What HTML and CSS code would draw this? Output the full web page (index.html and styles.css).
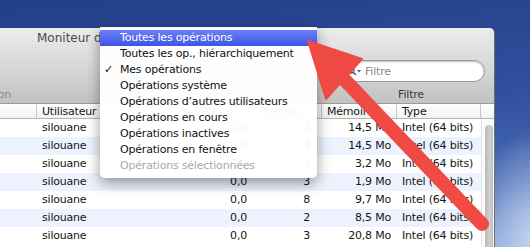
FILE: index.html
```html
<!DOCTYPE html>
<html lang="fr">
<head>
    <meta charset="UTF-8">
    <title>Moniteur d’activité</title>
    <link rel="stylesheet" href="styles.css">
</head>
<body>
    <div class="window">
        <div class="toolbar">
            <div class="titlebar">Moniteur d’activité</div>
            <div class="tools">
                <div class="search">
                    <svg class="search-icon" width="14" height="10" viewBox="0 0 14 10">
                        <circle cx="4" cy="4" r="3" fill="none" stroke="#5a5a5a" stroke-width="1.4"/>
                        <line x1="6.2" y1="6.2" x2="9" y2="9" stroke="#5a5a5a" stroke-width="1.6"/>
                        <polygon points="10,4 14,4 12,6.5" fill="#5a5a5a"/>
                    </svg>
                    <span class="placeholder">Filtre</span>
                </div>
            </div>
            <div class="labels">
                <div class="label-left"><span>Quitter l’opération</span></div>
                <div class="label-filter">Filtre</div>
            </div>
        </div>

        <div class="table-head">
            <div class="col c-name"></div>
            <div class="col c-user">Utilisateur</div>
            <div class="col c-cpu">% CPU</div>
            <div class="col c-threads">Threads</div>
            <div class="col c-mem">Mémoire</div>
            <div class="col c-type">Type</div>
            <div class="col c-scroll"></div>
        </div>

        <div class="table-body">
            <div class="rows">
                <div class="row">
                    <div class="col c-name"></div>
                    <div class="col c-user">silouane</div>
                    <div class="col c-cpu num">0,0</div>
                    <div class="col c-threads num">3</div>
                    <div class="col c-mem num">14,5 Mo</div>
                    <div class="col c-type">Intel (64 bits)</div>
                </div>
                <div class="row">
                    <div class="col c-name"></div>
                    <div class="col c-user">silouane</div>
                    <div class="col c-cpu num">0,0</div>
                    <div class="col c-threads num">4</div>
                    <div class="col c-mem num">14,5 Mo</div>
                    <div class="col c-type">Intel (64 bits)</div>
                </div>
                <div class="row">
                    <div class="col c-name"></div>
                    <div class="col c-user">silouane</div>
                    <div class="col c-cpu num">0,0</div>
                    <div class="col c-threads num">3</div>
                    <div class="col c-mem num">3,2 Mo</div>
                    <div class="col c-type">Intel (64 bits)</div>
                </div>
                <div class="row">
                    <div class="col c-name"></div>
                    <div class="col c-user">silouane</div>
                    <div class="col c-cpu num">0,0</div>
                    <div class="col c-threads num">3</div>
                    <div class="col c-mem num">1,9 Mo</div>
                    <div class="col c-type">Intel (64 bits)</div>
                </div>
                <div class="row">
                    <div class="col c-name"></div>
                    <div class="col c-user">silouane</div>
                    <div class="col c-cpu num">0,0</div>
                    <div class="col c-threads num">8</div>
                    <div class="col c-mem num">9,7 Mo</div>
                    <div class="col c-type">Intel (64 bits)</div>
                </div>
                <div class="row">
                    <div class="col c-name"></div>
                    <div class="col c-user">silouane</div>
                    <div class="col c-cpu num">0,0</div>
                    <div class="col c-threads num">2</div>
                    <div class="col c-mem num">8,5 Mo</div>
                    <div class="col c-type">Intel (64 bits)</div>
                </div>
                <div class="row">
                    <div class="col c-name"></div>
                    <div class="col c-user">silouane</div>
                    <div class="col c-cpu num">0,0</div>
                    <div class="col c-threads num">3</div>
                    <div class="col c-mem num">20,8 Mo</div>
                    <div class="col c-type">Intel (64 bits)</div>
                </div>
            </div>
            <div class="scroller"><div class="thumb"></div></div>
        </div>
    </div>

    <!-- menu déroulant ouvert -->
    <div class="menu">
        <div class="item selected"><span class="check"></span>Toutes les opérations</div>
        <div class="item"><span class="check"></span>Toutes les op., hiérarchiquement</div>
        <div class="item"><span class="check">✓</span>Mes opérations</div>
        <div class="item"><span class="check"></span>Opérations système</div>
        <div class="item"><span class="check"></span>Opérations d’autres utilisateurs</div>
        <div class="item"><span class="check"></span>Opérations en cours</div>
        <div class="item"><span class="check"></span>Opérations inactives</div>
        <div class="item"><span class="check"></span>Opérations en fenêtre</div>
        <div class="item disabled"><span class="check"></span>Opérations sélectionnées</div>
    </div>

    <!-- flèche rouge -->
    <svg class="arrow" width="530" height="247" viewBox="0 0 530 247">
        <line x1="342" y1="77" x2="482" y2="224" stroke="#ef4a44" stroke-width="14" stroke-linecap="round"/>
        <polygon points="308,41 362,59 326,99" fill="#ef4a44" stroke="#ef4a44" stroke-width="2" stroke-linejoin="round"/>
    </svg>
</body>
</html>
```

FILE: styles.css
```css
* {
    box-sizing: border-box;
}
body {
    margin: 0;
    width: 530px;
    height: 247px;
    overflow: hidden;
    position: relative;
    font-family: "DejaVu Sans", Verdana, sans-serif;
    font-size: 11px;
    letter-spacing: -0.2px;
    color: #151515;
    background:
        radial-gradient(ellipse 70px 110px at 535px 240px, #c3d4ef, rgba(140, 170, 220, 0)),
        linear-gradient(175deg, #223f88 0%, #2f4f9d 45%, #4a6bb6 80%, #7f9fd6 100%);
}

/* fenêtre */
.window {
    margin-top: 28px;
    margin-left: -40px;
    width: 535px;
    border-right: 1px solid #6f6f6f;
    border-top-right-radius: 5px;
    overflow: hidden;
}
.toolbar {
    height: 75px;
    padding-bottom: 1px;
    background: linear-gradient(#ececec, #d6d6d6 55%, #c2c2c2);
}
.titlebar {
    height: 20px;
    line-height: 20px;
    padding-left: 77px;
    font-size: 12px;
    letter-spacing: 0;
    color: #4a4a4a;
    white-space: nowrap;
}
.tools {
    margin-top: 12px;
    height: 22px;
    display: flex;
    justify-content: flex-end;
    padding-right: 9px;
}
.search {
    width: 148px;
    height: 22px;
    border-radius: 11px;
    background: #fff;
    border: 1px solid #9a9a9a;
    box-shadow: inset 0 1px 2px rgba(0, 0, 0, 0.25);
    display: flex;
    align-items: center;
    padding-left: 9px;
    gap: 4px;
}
.placeholder {
    color: #8a8a8a;
}
.labels {
    margin-top: 6px;
    height: 14px;
    line-height: 14px;
    display: flex;
    justify-content: space-between;
    padding-right: 9px;
    white-space: nowrap;
}
.label-left {
    width: 51px;
    display: flex;
    justify-content: flex-end;
    color: #8c8c8c;
}
.label-filter {
    width: 148px;
    text-align: center;
    color: #3c3c3c;
}

/* tableau */
.table-head {
    display: flex;
    height: 16px;
    line-height: 15px;
    border-top: 1px solid #9c9c9c;
    border-bottom: 1px solid #b4b4b4;
    background: linear-gradient(#ffffff, #f1f1f1);
    white-space: nowrap;
}
.table-head .col {
    border-right: 1px solid #c6c6c6;
    text-align: left;
}
.col {
    overflow: hidden;
    white-space: nowrap;
    padding: 0 5px;
}
.c-name { width: 77px; }
.c-user { width: 138px; }
.c-cpu { width: 77px; }
.c-threads { width: 70px; padding-right: 12px; }
.c-mem { width: 75px; padding-right: 6px; }
.c-type { width: 84px; }
.c-scroll { width: 13px; border-right: none !important; }
.num {
    text-align: right;
}
.table-body {
    display: flex;
    height: 130px;
    background: #fff;
}
.rows {
    width: 521px;
}
.row {
    display: flex;
    height: 18px;
    line-height: 18px;
}
.row:nth-child(even) {
    background: #edf3fe;
}
.scroller {
    width: 13px;
    border-left: 1px solid #e2e2e2;
    background: #fafafa;
    padding: 6px 0 0 3px;
}
.thumb {
    width: 8px;
    height: 150px;
    border-radius: 4px;
    background: linear-gradient(90deg, #b9b9b9, #d0d0d0 60%, #bdbdbd);
}

/* menu */
.menu {
    position: absolute;
    left: 100px;
    top: 27px;
    width: 217px;
    padding: 3px 0 4px;
    background: rgba(255, 255, 255, 0.96);
    border-radius: 0 0 5px 5px;
    box-shadow: 0 5px 14px rgba(0, 0, 0, 0.4);
    white-space: nowrap;
}
.item {
    display: flex;
    height: 16px;
    line-height: 16px;
    color: #111;
}
.check {
    width: 20px;
    padding-left: 4px;
    letter-spacing: 0;
}
.item.selected {
    background: linear-gradient(#6a80f6, #3d55e8);
    color: #fff;
}
.item.disabled {
    color: #a9a9a9;
}

/* flèche */
.arrow {
    position: absolute;
    left: 0;
    top: 0;
}
```
